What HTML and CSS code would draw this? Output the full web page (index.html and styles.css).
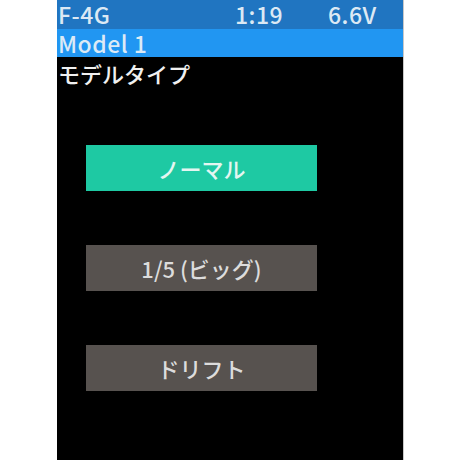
FILE: index.html
```html
<!DOCTYPE html>
<html lang="ja">
<head>
<meta charset="utf-8">
<link rel="stylesheet" href="styles.css">
</head>
<body>
<div class="screen">
  <div class="status">
    <span class="name">F-4G</span>
    <span class="time">1:19</span>
    <span class="volt">6.6V</span>
  </div>
  <div class="model">Model 1</div>
  <div class="title">モデルタイプ</div>
  <div class="options">
    <div class="opt active">ノーマル</div>
    <div class="opt">1/5 (ビッグ)</div>
    <div class="opt">ドリフト</div>
  </div>
</div>
</body>
</html>
```
FILE: styles.css
```css
html, body {
  margin: 0;
  padding: 0;
  background: #ffffff;
}
body {
  font-family: "Noto Sans CJK JP", "Noto Sans", sans-serif;
  font-size: 22px;
  font-weight: 500;
}
.screen {
  margin-left: 57px;
  width: 346px;
  height: 460px;
  background: #000000;
  border-right: 1px solid #c8c8c8;
  overflow: hidden;
}
.status {
  display: grid;
  grid-template-columns: 177px 93px auto;
  align-items: center;
  height: 29px;
  background: #2075c1;
  color: #dce9f4;
  padding-left: 1px;
  font-size: 23px;
  letter-spacing: 0.5px;
}
.status span {
  line-height: 1;
}
.model {
  display: flex;
  align-items: center;
  height: 28px;
  background: #2196f2;
  color: #dceaf6;
  padding-left: 1px;
  font-size: 23px;
  letter-spacing: 0.5px;
  line-height: 1;
}
.title {
  display: flex;
  align-items: center;
  height: 32px;
  color: #f0f0f0;
  padding-left: 1px;
  line-height: 1;
}
.options {
  display: flex;
  flex-direction: column;
  gap: 54px;
  margin-top: 56px;
  margin-left: 29px;
}
.opt {
  width: 231px;
  height: 46px;
  line-height: 46px;
  text-align: center;
  background: #57524f;
  color: #dcdcdc;
}
.opt.active {
  background: #1ec9a3;
  color: #e4f6f1;
}
```
